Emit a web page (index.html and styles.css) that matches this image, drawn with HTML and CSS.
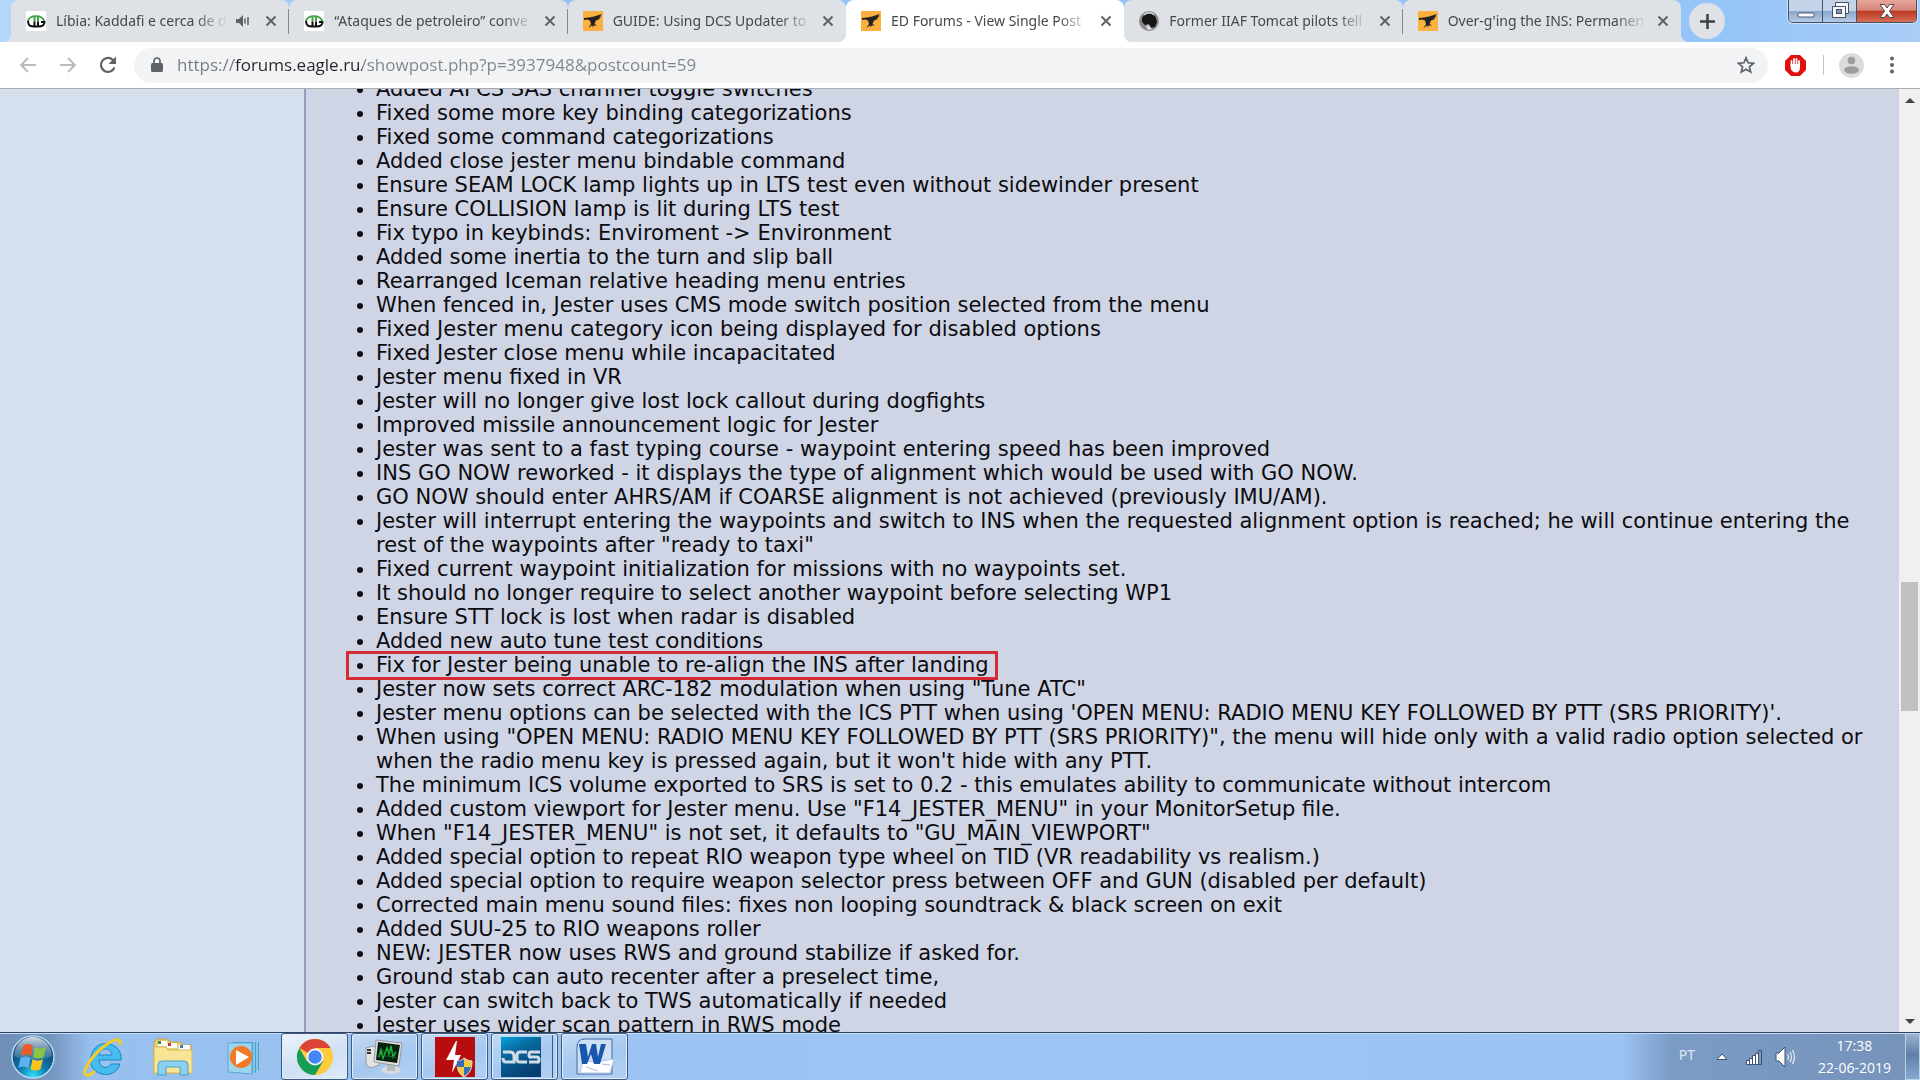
FILE: index.html
```html
<!DOCTYPE html>
<html lang="en">
<head>
<meta charset="utf-8">
<title>ED Forums - View Single Post</title>
<link rel="stylesheet" href="styles.css">
</head>
<body>
<svg class="defs" aria-hidden="true">
  <symbol id="close" viewBox="0 0 12 12"><path d="M1.500 1.500l9 9M10.500 1.500l-9 9" stroke="#5f6368" stroke-width="2" fill="none"/></symbol>
  <symbol id="eagle" viewBox="0 0 20 20"><rect width="20" height="20" fill="#fbb03f"/><path d="M1 7l5-.5 5-1L19 3l-2 2.500 1.500 0-3 2 2 .2-4.500 1.800-1.500 3.500 2.500 1.500-3 0-2 2 .5-2.500-4 3 2.500-4-1-3.500-3-1-3 .5z" fill="#222"/></symbol>
  <symbol id="cavok" viewBox="0 0 20 20"><rect width="20" height="20" fill="#fff"/><path d="M2 10.500C2 3.500 18 3.500 18 10.500M8.500 5.500v5M12 5.500v5" fill="none" stroke="#43a147" stroke-width="2"/><path d="M2 10c0 5 2.500 5.500 6.500 5.500M12 10.500v5c4.500 0 6.500-1.500 6.500-4.500H15M8.500 10.500v5H12" fill="none" stroke="#111" stroke-width="2"/></symbol>
</svg>

<header class="tabstrip">
  <nav class="tabs" aria-label="Tabs">
    <div class="tab tab-first">
      <svg class="favicon"><use href="#cavok"/></svg>
      <a class="tab-title" href="#">Líbia: Kaddafi e cerca de d</a>
      <button class="tab-btn audio" aria-label="Mute tab"><svg width="14" height="14" viewBox="0 0 14 14"><path d="M0 5h3l4-4v12L3 9H0z" fill="#5f6368"/><path d="M9 4.500v5M12 3v8" stroke="#5f6368" stroke-width="1.500"/></svg></button>
      <button class="tab-btn" aria-label="Close tab"><svg class="x"><use href="#close"/></svg></button>
    </div>
    <div class="tab">
      <svg class="favicon"><use href="#cavok"/></svg>
      <a class="tab-title" href="#">“Ataques de petroleiro” conve</a>
      <button class="tab-btn" aria-label="Close tab"><svg class="x"><use href="#close"/></svg></button>
    </div>
    <div class="tab tab-before">
      <svg class="favicon"><use href="#eagle"/></svg>
      <a class="tab-title" href="#">GUIDE: Using DCS Updater to</a>
      <button class="tab-btn" aria-label="Close tab"><svg class="x"><use href="#close"/></svg></button>
    </div>
    <div class="tab tab-active">
      <svg class="favicon"><use href="#eagle"/></svg>
      <a class="tab-title" href="#" aria-current="page">ED Forums - View Single Post</a>
      <button class="tab-btn" aria-label="Close tab"><svg class="x"><use href="#close"/></svg></button>
    </div>
    <div class="tab">
      <svg class="favicon" viewBox="0 0 20 20"><circle cx="10" cy="10" r="10" fill="#8b8b8b"/><path d="M3 7c2-5 12-6 14 0l1 4-2 5-5 1-1-4-4 1-3-3z" fill="#161616"/><path d="M5 4c3-3 8-3 10 0" stroke="#d0d0d0" stroke-width="1.500" fill="none"/><path d="M7 15l3-1 3 4-4 1z" fill="#ddd"/></svg>
      <a class="tab-title" href="#">Former IIAF Tomcat pilots tell</a>
      <button class="tab-btn" aria-label="Close tab"><svg class="x"><use href="#close"/></svg></button>
    </div>
    <div class="tab tab-last">
      <svg class="favicon"><use href="#eagle"/></svg>
      <a class="tab-title" href="#">Over-g'ing the INS: Permanen</a>
      <button class="tab-btn" aria-label="Close tab"><svg class="x"><use href="#close"/></svg></button>
    </div>
  </nav>
  <button class="new-tab" aria-label="New tab"><svg width="15" height="15" viewBox="0 0 15 15"><path d="M7.500 0v15M0 7.500h15" stroke="#3c4043" stroke-width="2.500"/></svg></button>
  <div class="window-controls">
    <button class="win" aria-label="Minimize"><svg width="18" height="22" viewBox="0 0 18 22"><rect x="1" y="13" width="16" height="4" rx="1" fill="#fff" stroke="#4a5570"/></svg></button>
    <button class="win" aria-label="Restore"><svg width="20" height="22" viewBox="0 0 20 22"><path d="M5.500 2.500h13v11h-3v4h-13v-11h3z" fill="#f6f8fb" stroke="#454f66"/><path d="M5.500 6.500h10v7" fill="none" stroke="#454f66"/><rect x="6.500" y="9.500" width="5" height="4" fill="#7f97bb" stroke="#454f66"/></svg></button>
    <button class="win win-close" aria-label="Close"><svg width="16" height="22" viewBox="0 0 16 22"><path d="M1 4.500h4.500L8 8l2.500-3.500H15L10.500 11l4.500 6.500h-4.500L8 14l-2.500 3.500H1L5.500 11z" fill="#fff" stroke="#55404c"/></svg></button>
  </div>
</header>

<div class="toolbar">
  <button class="nav-btn" aria-label="Back"><svg width="16" height="16" viewBox="0 0 16 16"><path d="M16 8H1.500M8 1L1.200 8 8 15" fill="none" stroke="#b9bbbe" stroke-width="2"/></svg></button>
  <button class="nav-btn" aria-label="Forward"><svg width="16" height="16" viewBox="0 0 16 16"><path d="M0 8h14.500M8 1l6.800 7L8 15" fill="none" stroke="#b9bbbe" stroke-width="2"/></svg></button>
  <button class="nav-btn" aria-label="Reload"><svg width="18" height="18" viewBox="0 0 18 18"><path d="M15.500 11.500A7 7 0 1 1 14 4l1.500 2" fill="none" stroke="#5f6368" stroke-width="2.200"/><path d="M17 .5V8H9.500z" fill="#5f6368"/></svg></button>
  <div class="omnibox">
    <svg width="12" height="16" viewBox="0 0 12 16"><rect y="6" width="12" height="9" rx="1.500" fill="#5f6368"/><path d="M3 6V4a3 3 0 0 1 6 0v2" fill="none" stroke="#5f6368" stroke-width="1.700"/></svg>
    <input class="url" type="text" aria-label="Address" value="https://forums.eagle.ru/showpost.php?p=3937948&amp;postcount=59">
    <button class="star" aria-label="Bookmark"><svg width="18" height="18" viewBox="0 0 18 18"><path d="M9 1.800l2.100 5 5.400.5-4.100 3.500 1.300 5.300L9 13.300l-4.700 2.800 1.300-5.300L1.500 7.300l5.400-.5z" fill="none" stroke="#5f6368" stroke-width="1.700"/></svg></button>
  </div>
  <button class="ext" aria-label="Ad blocker"><svg width="21" height="21" viewBox="0 0 21 21"><path d="M6 0h9l6 6v9l-6 6H6l-6-6V6z" fill="#e0100e"/><path d="M6.500 10V6M9 10V4M11.500 10V4M14 11V6" stroke="#fff" stroke-width="1.800" stroke-linecap="round"/><path d="M5.600 9h9.300v4c0 3-2 4.500-4 4.500-3 0-5.300-2.500-5.300-5z" fill="#fff"/></svg></button>
  <span class="divider"></span>
  <button class="profile" aria-label="Profile"><svg width="25" height="25" viewBox="0 0 25 25"><circle cx="12.500" cy="12.500" r="12.500" fill="#dcdcdc"/><circle cx="12.500" cy="7.500" r="3.800" fill="#9d9d9d"/><ellipse cx="12.500" cy="17" rx="7.500" ry="3.800" fill="#9d9d9d"/></svg></button>
  <button class="more" aria-label="Menu"><svg width="4" height="18" viewBox="0 0 4 18"><g fill="#5f6368"><circle cx="2" cy="2.500" r="2"/><circle cx="2" cy="9" r="2"/><circle cx="2" cy="15.500" r="2"/></g></svg></button>
</div>

<main class="page">
  <aside class="side"></aside>
  <article class="post">
    <ul class="changes">
      <li>Added AFCS SAS channel toggle switches</li>
      <li>Fixed some more key binding categorizations</li>
      <li>Fixed some command categorizations</li>
      <li>Added close jester menu bindable command</li>
      <li>Ensure SEAM LOCK lamp lights up in LTS test even without sidewinder present</li>
      <li>Ensure COLLISION lamp is lit during LTS test</li>
      <li>Fix typo in keybinds: Enviroment -&gt; Environment</li>
      <li>Added some inertia to the turn and slip ball</li>
      <li>Rearranged Iceman relative heading menu entries</li>
      <li>When fenced in, Jester uses CMS mode switch position selected from the menu</li>
      <li>Fixed Jester menu category icon being displayed for disabled options</li>
      <li>Fixed Jester close menu while incapacitated</li>
      <li>Jester menu fixed in VR</li>
      <li>Jester will no longer give lost lock callout during dogfights</li>
      <li>Improved missile announcement logic for Jester</li>
      <li>Jester was sent to a fast typing course - waypoint entering speed has been improved</li>
      <li>INS GO NOW reworked - it displays the type of alignment which would be used with GO NOW.</li>
      <li>GO NOW should enter AHRS/AM if COARSE alignment is not achieved (previously IMU/AM).</li>
      <li>Jester will interrupt entering the waypoints and switch to INS when the requested alignment option is reached; he will continue entering the rest of the waypoints after "ready to taxi"</li>
      <li>Fixed current waypoint initialization for missions with no waypoints set.</li>
      <li>It should no longer require to select another waypoint before selecting WP1</li>
      <li>Ensure STT lock is lost when radar is disabled</li>
      <li>Added new auto tune test conditions</li>
      <li class="marked">Fix for Jester being unable to re-align the INS after landing</li>
      <li>Jester now sets correct ARC-182 modulation when using "Tune ATC"</li>
      <li>Jester menu options can be selected with the ICS PTT when using 'OPEN MENU: RADIO MENU KEY FOLLOWED BY PTT (SRS PRIORITY)'.</li>
      <li>When using "OPEN MENU: RADIO MENU KEY FOLLOWED BY PTT (SRS PRIORITY)", the menu will hide only with a valid radio option selected or when the radio menu key is pressed again, but it won't hide with any PTT.</li>
      <li>The minimum ICS volume exported to SRS is set to 0.2 - this emulates ability to communicate without intercom</li>
      <li>Added custom viewport for Jester menu. Use "F14_JESTER_MENU" in your MonitorSetup file.</li>
      <li>When "F14_JESTER_MENU" is not set, it defaults to "GU_MAIN_VIEWPORT"</li>
      <li>Added special option to repeat RIO weapon type wheel on TID (VR readability vs realism.)</li>
      <li>Added special option to require weapon selector press between OFF and GUN (disabled per default)</li>
      <li>Corrected main menu sound files: fixes non looping soundtrack &amp; black screen on exit</li>
      <li>Added SUU-25 to RIO weapons roller</li>
      <li>NEW: JESTER now uses RWS and ground stabilize if asked for.</li>
      <li>Ground stab can auto recenter after a preselect time,</li>
      <li>Jester can switch back to TWS automatically if needed</li>
      <li>Jester uses wider scan pattern in RWS mode</li>
    </ul>
  </article>
  <div class="scrollbar">
    <button class="scroll-btn" aria-label="Scroll up"><svg width="10" height="5" viewBox="0 0 10 5"><path d="M0 5l5-5 5 5z" fill="#444"/></svg></button>
    <div class="track"><div class="thumb"></div></div>
    <button class="scroll-btn" aria-label="Scroll down"><svg width="10" height="5" viewBox="0 0 10 5"><path d="M0 0l5 5 5-5z" fill="#444"/></svg></button>
  </div>
</main>

<footer class="taskbar">
  <div class="launchers">
    <button class="launch" aria-label="Start"><svg width="44" height="44" viewBox="0 0 44 44"><defs><radialGradient id="orb" cx="50%" cy="95%" r="85%"><stop offset="0" stop-color="#2fe0fb"/><stop offset=".4" stop-color="#0d78ad"/><stop offset="1" stop-color="#123a66"/></radialGradient><linearGradient id="gl" x2="0" y2="1"><stop offset="0" stop-color="#e6eef5" stop-opacity=".9"/><stop offset="1" stop-color="#8db0cd" stop-opacity=".25"/></linearGradient></defs><circle cx="22" cy="22" r="21" fill="url(#orb)" stroke="#b6d6ee" stroke-width="1.500"/><path d="M3 21a19 19 0 0 1 38 0c-10 5-28 5-38 0z" fill="url(#gl)"/><path d="M12 11c4-3 7-2 10 0l-2 10c-3-2-6-2-10 0z" fill="#ec5b26"/><path d="M24 12c4 2 7 2 11 0l-2.500 10c-4 2-7 2-10.500 0z" fill="#8cc63e"/><path d="M9.500 23c4-2 7-2 10 0l-2 10c-3-2-6-2-10 0z" fill="#5fb2ee"/><path d="M21.500 24c4 2 7 2 10.500 0l-2.500 10c-4 2-7 2-10 0z" fill="#fdc41c"/></svg></button>
    <button class="launch" aria-label="Internet Explorer"><svg width="40" height="40" viewBox="0 0 40 40"><path d="M38 23H16c0 8 9 10 12 4h9c-3 9-11 12-18 10C10 35 6 28 8 19 10 10 18 5 26 7c9 2 13 9 12 16zM16 18h13c-1-8-12-8-13 0z" fill="#45bdee" stroke="#1c83c5"/><path d="M37 8c2-10-10-4-18 3C8 20-2 36 3 38c3 1 6-1 9-4" fill="none" stroke="#f5cb26" stroke-width="3"/></svg></button>
    <button class="launch" aria-label="File Explorer"><svg width="40" height="40" viewBox="0 0 40 40"><path d="M1 6l3-4h10l3 3h10l3 3h8v28H1z" fill="#e9cf70" stroke="#c5a344"/><path d="M5 4h9v5H5zM14 6h10v5H14zM26 8h11v5H26z" fill="#fff"/><path d="M5 4h3v3H5z" fill="#2d963b"/><path d="M15 6h3v3h-3z" fill="#d23226"/><path d="M27 8h3v3h-3z" fill="#2f80c8"/><path d="M1 10h12l2 3h24v23H1z" fill="#f7e595" stroke="#d5b95c"/><path d="M5 38V28q0-4 4-4h22q4 0 4 4v10h-8v-8H13v8z" fill="#8bd0ec" stroke="#4c9fc8"/></svg></button>
    <button class="launch" aria-label="Media Player"><svg width="40" height="40" viewBox="0 0 40 40"><path d="M10 5h26v28l-4 3H10z" fill="#4aa1cb"/><path d="M31 5v31M34 5v30" stroke="#c4ebf8"/><path d="M5 6h24v31L5 35z" fill="#9cd4ee" stroke="#58a9d2"/><circle cx="18" cy="20" r="11" fill="#f47922"/><path d="M13 13l13 7-13 8z" fill="#fff"/></svg></button>
  </div>
  <div class="windows">
    <button class="task task-active" aria-label="Chrome"><svg width="38" height="38" viewBox="0 0 38 38"><circle cx="19" cy="19" r="18" fill="#fdcb3c"/><path d="M19 19L3.400 10A18 18 0 0 1 34.600 10H19z" fill="#dc4437"/><path d="M19 19l-8 4.500L3.400 10A18 18 0 0 0 19 37l8-13.500z" fill="#159e58"/><circle cx="19" cy="19" r="8.500" fill="#f4f6f8"/><circle cx="19" cy="19" r="6.700" fill="#4486f4"/></svg></button>
    <button class="task" aria-label="Monitor"><svg width="40" height="38" viewBox="0 0 40 38"><path d="M1 10l7-2 6 3v16l-8 3-5-3z" fill="#e3e5e5" stroke="#979ca0"/><path d="M2 12h4M2 15h4" stroke="#333" stroke-width="2"/><ellipse cx="26" cy="32" rx="10" ry="4" fill="#d7dade"/><path d="M22 25h8v8h-8z" fill="#b5babf"/><path d="M11 2l26 3-3 23-25-4z" fill="#dddfe0" stroke="#999"/><path d="M13 4l22 3-3 18-21-3z" fill="#08220f"/><path d="M14 19l2-7 2 8 4-10 2 6 2-8 2 11 3-5" fill="none" stroke="#21bb3c" stroke-width="1.500"/><path d="M14 12l17 3M13 17l18 2" stroke="#176d2a"/></svg></button>
    <button class="task" aria-label="Flash tool"><svg width="40" height="40" viewBox="0 0 40 40"><rect width="40" height="40" fill="#b80d0f"/><path d="M21 4L11 23h8l-2 13 9-18h-6l2-14z" fill="#fff"/><path d="M29 21c3 2 5 3 8 3 0 8-2 12-8 16-6-4-7-8-7-16 3 0 5-1 7-3z" fill="#f4cb3d" stroke="#e2e4e8"/><path d="M29 22v8h-7v-6c3 0 5-1 7-2zM29 30h7c-1 4-3 7-7 9z" fill="#356eb8"/></svg></button>
    <button class="task task-stack" aria-label="DCS"><svg width="40" height="40" viewBox="0 0 40 40"><defs><linearGradient id="dcs" x2=".5" y2="1"><stop offset="0" stop-color="#05a3df"/><stop offset=".4" stop-color="#08699f"/><stop offset="1" stop-color="#063f72"/></linearGradient></defs><rect width="40" height="40" fill="url(#dcs)"/><path d="M2 15h7q4 0 4 4v6H5q-3 0-3-4M26 15H19q-3 0-3 3v4q0 3 3 3h7M39 15H30q-2 0-2 3t2 2h6q2 0 2 3t-2 2H28" fill="none" stroke="#d1dbe5" stroke-width="3"/></svg></button>
    <button class="task" aria-label="Word"><svg width="38" height="38" viewBox="0 0 38 38"><path d="M9 1h27v35H1V9q0-8 8-8z" fill="#cfe0f5" stroke="#4267a5"/><path d="M4 35l3-12 13 1 18-3-4 14z" fill="#fff" stroke="#adc4e4"/><path d="M10 29l12 4M26 26l8 1" stroke="#a9bddc"/><path d="M3 6h7l2 13 4-13h4l2 13 3-13h5l-6 20h-6l-3-10-4 10H6z" fill="#1856ae"/></svg></button>
  </div>
  <div class="tray">
    <span class="lang">PT</span>
    <button class="tray-btn" aria-label="Show hidden icons"><svg width="12" height="8" viewBox="0 0 12 8"><path d="M6 1l5 5.500H1z" fill="#fff" stroke="#3d5270"/></svg></button>
    <svg class="signal" width="17" height="16" viewBox="0 0 17 16"><g fill="#fff" stroke="#3d5270"><path d="M.5 11.500h3v4h-3zM3.500 9.500h3v6h-3zM6.500 6.500h3v9h-3z"/><path d="M9.500 4.500h3v11h-3z"/><path d="M12.500 1.500h3v14h-3z" fill="#8197b4"/></g></svg>
    <svg class="volume" width="21" height="22" viewBox="0 0 21 22"><path d="M1 7h3l6-6v20l-6-6H1z" fill="#fff" stroke="#3d5270"/><path d="M12.500 8q2 3 0 6M15 6q3 5 0 10M17.500 4q4 7 0 14" fill="none" stroke="#e6edf6" stroke-width="1.200"/></svg>
    <div class="clock"><time>17:38</time><time>22-06-2019</time></div>
    <button class="show-desktop" aria-label="Show desktop"></button>
  </div>
</footer>
</body>
</html>
```
FILE: styles.css
```css
* { box-sizing: border-box; }

body {
  margin: 0;
  height: 100vh;
  display: flex;
  flex-direction: column;
  overflow: hidden;
  font-family: "Noto Sans", "Open Sans", sans-serif;
}

button {
  padding: 0;
  border: 0;
  background: none;
  display: flex;
  align-items: center;
  justify-content: center;
}

svg { display: block; flex: none; }
.defs { position: absolute; width: 0; height: 0; }

/* Tab strip */
.tabstrip {
  flex: none;
  height: 42px;
  display: flex;
  align-items: flex-start;
  padding: 0 3px 0 11px;
  background: linear-gradient(90deg, #b4d6fb, #92c2f6 30%, #95c4f8 90%, #a9cdf6);
}
.tabs { display: flex; flex: 0 1 1670px; min-width: 0; height: 42px; }
.tab {
  position: relative;
  flex: 1 1 0;
  min-width: 0;
  display: flex;
  align-items: center;
  padding: 0 10px 0 15px;
  border-radius: 8px 8px 0 0;
  background: #dee1e6;
}
.tab:not(.tab-active, .tab-before, .tab-last)::after {
  content: "";
  position: absolute;
  right: 0;
  top: 9px;
  width: 1px;
  height: 25px;
  background: #85888d;
}
.tab-active { background: #fff; z-index: 1; }
.tab-active::before, .tab-active::after,
.tab-first::before, .tab.tab-last::after {
  content: "";
  position: absolute;
  bottom: 0;
  width: 8px;
  height: 8px;
}
.tab-active::before, .tab-first::before { right: 100%; }
.tab-active::after, .tab-last::after { left: 100%; }
.tab-active::before { background: radial-gradient(circle at 0 0, transparent 8px, #fff 8px); }
.tab-active::after { background: radial-gradient(circle at 100% 0, transparent 8px, #fff 8px); }
.tab-first::before { background: radial-gradient(circle at 0 0, transparent 8px, #dee1e6 8px); }
.tab-last::after { background: radial-gradient(circle at 100% 0, transparent 8px, #dee1e6 8px); }
.favicon { width: 20px; height: 20px; }
.tab-title {
  flex: 1;
  min-width: 0;
  margin: 0 8px 0 10px;
  overflow: hidden;
  white-space: nowrap;
  font-size: 14px;
  line-height: 24px;
  color: #45484c;
  text-decoration: none;
  mask-image: linear-gradient(90deg, #000 calc(100% - 32px), transparent);
}
.tab-btn { flex: none; width: 16px; height: 16px; }
.audio { margin-right: 12px; }
.x { width: 12px; height: 12px; }
.new-tab {
  flex: none;
  width: 36px;
  height: 36px;
  margin: 3px 0 0 8px;
  border-radius: 50%;
  background: #dee1e6;
}
.window-controls {
  display: flex;
  margin-left: auto;
  height: 23px;
  border: 1px solid #42516e;
  border-top: 0;
  border-radius: 0 0 5px 5px;
  overflow: hidden;
  box-shadow: 0 0 0 1px #cfe2f7;
}
.win {
  width: 34px;
  border-right: 1px solid #42516e;
  background: linear-gradient(#c3d3e8 0 48%, #8ba7cb 52%, #b4cbe7);
}
.win-close {
  width: 59px;
  border-right: 0;
  background: linear-gradient(#e5a79a 0, #d5877a 45%, #bd3a25 52%, #d56f53);
}

/* Toolbar */
.toolbar {
  flex: none;
  display: flex;
  align-items: center;
  height: 47px;
  padding: 0 22px 0 8px;
  border-bottom: 1px solid #a8abb0;
  background: #fff;
}
.nav-btn { flex: none; width: 40px; height: 36px; }
.omnibox {
  flex: 1;
  min-width: 0;
  display: flex;
  align-items: center;
  height: 35px;
  margin-left: 6px;
  padding: 0 13px 0 17px;
  border-radius: 18px;
  background: #f1f3f4;
}
.url {
  flex: 1;
  min-width: 0;
  margin-left: 14px;
  padding: 0;
  border: 0;
  outline: 0;
  font: 17px/24px "Open Sans", "Noto Sans", sans-serif;
  color: transparent;
  background: linear-gradient(90deg, #75797d 57px, #26282b 57px 185px, #808488 185px);
  background-clip: text;
  -webkit-background-clip: text;
}
.ext { margin-left: 17px; }
.divider { width: 1px; height: 20px; margin: 0 15px 0 17px; background: #c4c6c9; }
.more { margin-left: 26px; margin-right: 4px; }

/* Page */
.page { flex: 1; min-height: 0; display: flex; overflow: hidden; }
.side { flex: none; width: 304px; background: #d6dfee; }
.post {
  flex: 1;
  min-width: 0;
  overflow: hidden;
  border-left: 2px solid #8f9dbe;
  background: #cfd5e4;
}
.changes {
  margin: -12px 0 0;
  padding: 0 12px 0 70px;
  font-family: Verdana, "DejaVu Sans", sans-serif;
  font-size: 21px;
  line-height: 24px;
  color: #0c0c10;
}
.marked { position: relative; width: fit-content; }
.marked::before {
  content: "";
  position: absolute;
  inset: -2px -9px -3px -30px;
  border: 3px solid #d62a35;
}
.scrollbar {
  flex: none;
  display: flex;
  flex-direction: column;
  width: 21px;
  background: #f0f0f0;
}
.scroll-btn { flex: none; width: 21px; height: 22px; }
.track { flex: 1; display: grid; grid-template-rows: 471fr 129fr 299fr; padding: 0 2px; }
.thumb { grid-row: 2; background: #c1c1c1; }

/* Taskbar */
.taskbar {
  flex: none;
  display: flex;
  height: 48px;
  border-top: 1px solid #2f4564;
  box-shadow: inset 0 1px #c7dcf2;
  background: linear-gradient(90deg, #6f8fb7 0, #7394bd 50px, #97c0ee 90px, #9ec5f3 50%, #9cc4f3 1620px, #7b9cc6 1670px, #7692b9);
}
.launchers { display: flex; align-items: center; gap: 26px; padding-left: 11px; width: 281px; flex: none; }
.launch { width: 44px; height: 44px; }
.windows { display: flex; gap: 3px; }
.task {
  width: 67px;
  height: 47px;
  border: 1px solid #3f5a80;
  border-radius: 3px;
  box-shadow: inset 0 0 0 1px #dfecfa;
  background: linear-gradient(160deg, #c3daf4, #a6c8ef 55%, #b3d0f2);
}
.task-active { background: linear-gradient(160deg, #edf4fc, #cfe0f4 55%, #dfebf9); }
.task-stack {
  padding-right: 8px;
  box-shadow: inset 0 0 0 1px #dfecfa, inset -4px 0 #b3d0f2, inset -5px 0 #3f5a80;
}
.tray { display: flex; align-items: center; margin-left: auto; color: #fff; }
.lang { margin: -4px 21px 0 0; font-size: 14px; line-height: 20px; color: #dde7f3; }
.tray-btn { margin-right: 18px; }
.signal { margin-right: 12px; }
.clock {
  display: flex;
  flex-direction: column;
  align-items: center;
  margin: 0 14px 0 22px;
  font-family: "Open Sans", sans-serif;
  font-size: 14px;
  line-height: 22px;
}
.show-desktop {
  width: 15px;
  height: 47px;
  border: 1px solid #bcd0e8;
  background: linear-gradient(#9db3cf, #5f7fa9 45%, #88a9cf);
}
```
